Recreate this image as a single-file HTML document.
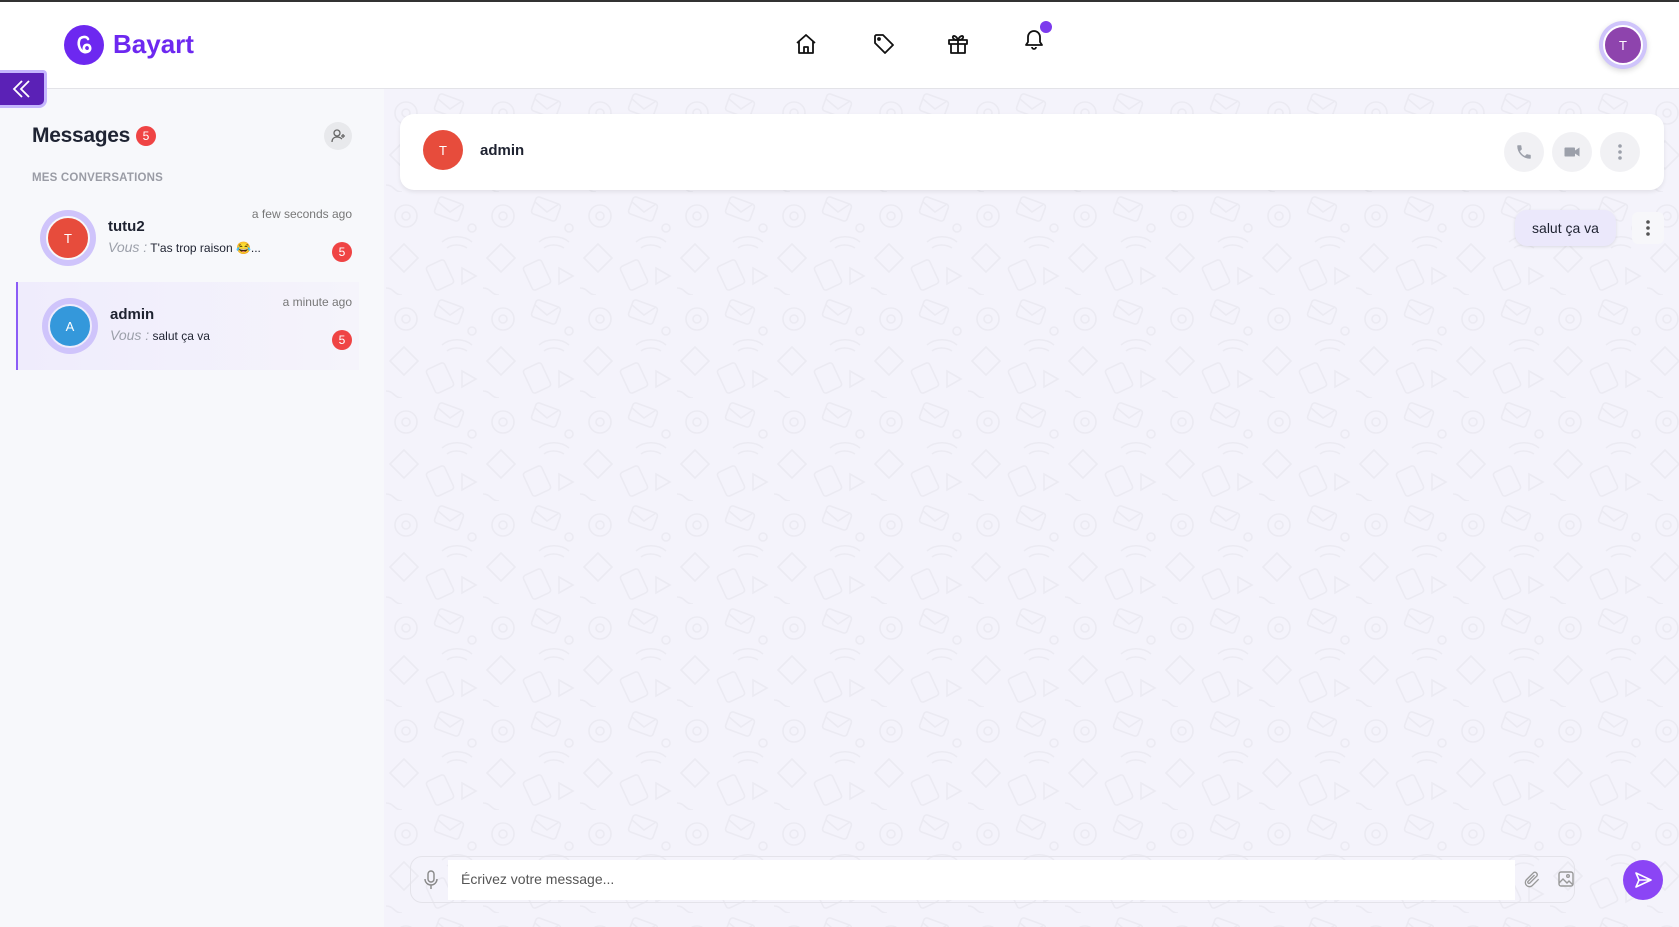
<!DOCTYPE html>
<html><head><meta charset="utf-8"><style>
*{box-sizing:border-box;margin:0;padding:0}
body{width:1679px;height:927px;overflow:hidden;font-family:"Liberation Sans","Noto Sans CJK JP",sans-serif;background:#f4f3fb;position:relative;color:#1e2230}
.abs{position:absolute}
.header{left:0;top:0;width:1679px;height:89px;background:#fff;border-top:2px solid #333;border-bottom:1px solid #e3e3e8}
.side{left:0;top:89px;width:384px;height:838px;background:#f7f8fb}
.circ{border-radius:50%;display:flex;align-items:center;justify-content:center;color:#fff;font-size:13px}
.badge{width:20px;height:20px;border-radius:50%;background:#ef4444;color:#fff;font-size:12px;display:flex;align-items:center;justify-content:center}
.ring{width:56px;height:56px;border-radius:50%;background:#cfc4fb;display:flex;align-items:center;justify-content:center}
.ring>div{width:44px;height:44px;border:2px solid #f7f8fb}
.btn{width:40px;height:40px;border-radius:50%;background:#f1f1f4;display:flex;align-items:center;justify-content:center}
</style></head><body>
<svg class="abs" style="left:384px;top:89px" width="1295" height="838">
<defs><pattern id="p" width="97" height="103" patternUnits="userSpaceOnUse">
<g fill="none" stroke="#ebeaf2" stroke-width="1.6">
<circle cx="22" cy="24" r="11"/><circle cx="22" cy="24" r="4"/>
<rect x="52" y="8" width="26" height="18" rx="3" transform="rotate(20 65 17)"/>
<path d="M54 10l12 10 12-8"/>
<path d="M6 66l14 14 14-14-14-14z"/>
<path d="M58 50c8-7 22-7 30 0M63 56c5-4 14-4 20 0"/>
<rect x="46" y="70" width="20" height="26" rx="3" transform="rotate(-25 56 83)"/>
<path d="M78 76l14 8-14 8z"/><circle cx="88" cy="36" r="4"/>
<path d="M2 96c8 0 8 7 16 7"/>
</g></pattern></defs>
<rect width="1295" height="838" fill="url(#p)"/></svg>
<div class="abs header"></div>
<div class="abs circ" style="left:64px;top:25px;width:40px;height:40px;background:#6d28f0">
<svg width="26" height="26" viewBox="0 0 26 26" fill="none" stroke="#fff" stroke-width="2.6" stroke-linecap="round"><path d="M17 7c-1-3-8-3-9 2-1 4 1 10 5 11 4 1 7-2 6-5-1-3-5-3-6 0-1 3 2 5 5 4"/></svg></div>
<div class="abs" style="left:113px;top:29px;font-size:26px;font-weight:bold;color:#6d28f0">Bayart</div>
<svg class="abs" style="left:794px;top:32px" width="24" height="24" viewBox="0 0 24 24" fill="none" stroke="#111" stroke-width="1.8" stroke-linejoin="round"><path d="M3 11l9-8 9 8M5 9v12h14V9M10 21v-6h4v6"/></svg>
<svg class="abs" style="left:872px;top:32px" width="24" height="24" viewBox="0 0 24 24" fill="none" stroke="#111" stroke-width="1.8" stroke-linejoin="round"><path d="M3 4v7l10 10 8-8L11 3H4z"/><circle cx="7" cy="7" r="1"/></svg>
<svg class="abs" style="left:946px;top:32px" width="24" height="24" viewBox="0 0 24 24" fill="none" stroke="#111" stroke-width="1.8" stroke-linejoin="round"><rect x="3" y="8" width="18" height="4"/><path d="M5 12v9h14v-9M12 8v13M12 8c-2-5-6-5-5-2 1 2 5 2 5 2zm0 0c2-5 6-5 5-2-1 2-5 2-5 2z"/></svg>
<svg class="abs" style="left:1022px;top:27px" width="24" height="24" viewBox="0 0 24 24" fill="none" stroke="#111" stroke-width="1.8" stroke-linejoin="round"><path d="M6 10a6 6 0 0112 0v5l2 3H4l2-3zM10 20a2 2 0 004 0"/></svg>
<div class="abs circ" style="left:1040px;top:21px;width:12px;height:12px;background:#7c3aed"></div>
<div class="abs" style="left:1599px;top:21px;width:48px;height:48px;border-radius:50%;background:#cfc4fb;box-shadow:0 2px 6px rgba(0,0,0,.15);display:flex;align-items:center;justify-content:center"><div class="circ" style="width:40px;height:40px;background:#8e44ad;border:2px solid #fff">T</div></div>
<div class="abs side"></div>
<div class="abs" style="left:0;top:70px;width:47px;height:38px;background:#5b21b6;border:3px solid #c4b5fd;border-left:none;border-radius:0 4px 8px 0;display:flex;align-items:center;justify-content:center"><svg width="22" height="22" viewBox="0 0 22 22" fill="none" stroke="#fff" stroke-width="1.8"><path d="M11 3l-8 8 8 8M18 3l-8 8 8 8"/></svg></div>
<div class="abs" style="left:32px;top:124px;font-size:21px;font-weight:bold;color:#1f2433;letter-spacing:-0.3px">Messages</div>
<div class="abs badge" style="left:136px;top:126px">5</div>
<div class="abs btn" style="left:324px;top:122px;width:28px;height:28px;background:#e8e9ec"><svg width="16" height="16" viewBox="0 0 16 16" fill="none" stroke="#666" stroke-width="1.3"><circle cx="7" cy="5" r="3"/><path d="M2 14c0-4 3-5 5-5s4 1 5 2M13 6v4M11 8h4"/></svg></div>
<div class="abs" style="left:32px;top:172px;font-size:11.5px;font-weight:bold;color:#9a9ca5;letter-spacing:.2px">MES CONVERSATIONS</div>
<div class="abs ring" style="left:40px;top:210px"><div class="circ" style="background:#e74c3c">T</div></div>
<div class="abs" style="left:108px;top:218px;font-size:15px;font-weight:bold">tutu2</div>
<div class="abs" style="left:108px;top:239px;font-size:12px"><i style="color:#9ca0aa;font-size:14px">Vous :</i> T'as trop raison 😂...</div>
<div class="abs" style="left:200px;top:207px;width:152px;text-align:right;font-size:12px;color:#777">a few seconds ago</div>
<div class="abs badge" style="left:332px;top:242px">5</div>
<div class="abs" style="left:16px;top:282px;width:343px;height:88px;background:linear-gradient(90deg,#efecfc,#f5f4fb);border-left:2px solid #8b5cf6"></div>
<div class="abs ring" style="left:42px;top:298px"><div class="circ" style="background:#3498db;border-color:#efecfc">A</div></div>
<div class="abs" style="left:110px;top:306px;font-size:15px;font-weight:bold">admin</div>
<div class="abs" style="left:110px;top:327px;font-size:12px"><i style="color:#9ca0aa;font-size:14px">Vous :</i> salut ça va</div>
<div class="abs" style="left:200px;top:295px;width:152px;text-align:right;font-size:12px;color:#777">a minute ago</div>
<div class="abs badge" style="left:332px;top:330px">5</div>
<div class="abs" style="left:400px;top:114px;width:1264px;height:76px;background:#fff;border-radius:14px;box-shadow:0 2px 4px rgba(0,0,0,.08)"></div>
<div class="abs circ" style="left:423px;top:130px;width:40px;height:40px;background:#e74c3c">T</div>
<div class="abs" style="left:480px;top:142px;font-size:15px;font-weight:bold">admin</div>
<div class="abs btn" style="left:1504px;top:132px"><svg width="18" height="18" viewBox="0 0 24 24" fill="#9ca0aa"><path d="M6.6 10.8a15 15 0 006.6 6.6l2.2-2.2c.3-.3.7-.4 1-.2 1.1.4 2.3.6 3.6.6.6 0 1 .4 1 1V20c0 .6-.4 1-1 1A17 17 0 013 4c0-.6.4-1 1-1h3.5c.6 0 1 .4 1 1 0 1.3.2 2.5.6 3.6.1.3 0 .7-.2 1z"/></svg></div>
<div class="abs btn" style="left:1552px;top:132px"><svg width="18" height="18" viewBox="0 0 24 24" fill="#9ca0aa"><rect x="2" y="6" width="14" height="12" rx="1"/><path d="M16 10l6-4v12l-6-4z"/></svg></div>
<div class="abs btn" style="left:1600px;top:132px"><svg width="4" height="16"><circle cx="2" cy="2" r="1.8" fill="#9ca0aa"/><circle cx="2" cy="8" r="1.8" fill="#9ca0aa"/><circle cx="2" cy="14" r="1.8" fill="#9ca0aa"/></svg></div>
<div class="abs" style="left:1515px;top:210px;width:101px;height:36px;background:#ebe8fb;border-radius:12px;box-shadow:0 1px 3px rgba(0,0,0,.1);font-size:14px;display:flex;align-items:center;justify-content:center">salut ça va</div>
<div class="abs" style="left:1632px;top:212px;width:32px;height:32px;background:#f7f7fa;border-radius:6px;display:flex;align-items:center;justify-content:center"><svg width="4" height="16"><circle cx="2" cy="2" r="1.8" fill="#555"/><circle cx="2" cy="8" r="1.8" fill="#555"/><circle cx="2" cy="14" r="1.8" fill="#555"/></svg></div>
<div class="abs" style="left:410px;top:856px;width:1165px;height:47px;border:1px solid #e4e3ea;border-radius:12px"></div>
<svg class="abs" style="left:422px;top:870px" width="18" height="20" viewBox="0 0 18 20" fill="none" stroke="#888" stroke-width="1.4"><rect x="6" y="1" width="6" height="11" rx="3"/><path d="M3 9a6 6 0 0012 0M9 15v4"/></svg>
<div class="abs" style="left:448px;top:860px;width:1067px;height:40px;background:#fff"></div>
<div class="abs" style="left:461px;top:871px;font-size:14px;color:#555">Écrivez votre message...</div>
<svg class="abs" style="left:1522px;top:870px" width="20" height="20" viewBox="0 0 24 24" fill="none" stroke="#999" stroke-width="1.6"><path d="M20 11l-8 8a5 5 0 01-7-7l9-9a3 3 0 014 4l-9 9a1.5 1.5 0 01-2-2l8-8"/></svg>
<svg class="abs" style="left:1557px;top:870px" width="18" height="18" viewBox="0 0 18 18" fill="none" stroke="#999" stroke-width="1.4"><rect x="2" y="2" width="14" height="14" rx="2"/><path d="M2 13l4-4 4 4 2-2 4 4"/><circle cx="11" cy="6" r="1.3"/></svg>
<div class="abs circ" style="left:1623px;top:860px;width:40px;height:40px;background:#8b45f5"><svg width="20" height="20" viewBox="0 0 20 20" fill="none" stroke="#fff" stroke-width="1.6" stroke-linejoin="round"><path d="M3 3l15 7-15 7 3-7zM6 10h12"/></svg></div>
</body></html>
